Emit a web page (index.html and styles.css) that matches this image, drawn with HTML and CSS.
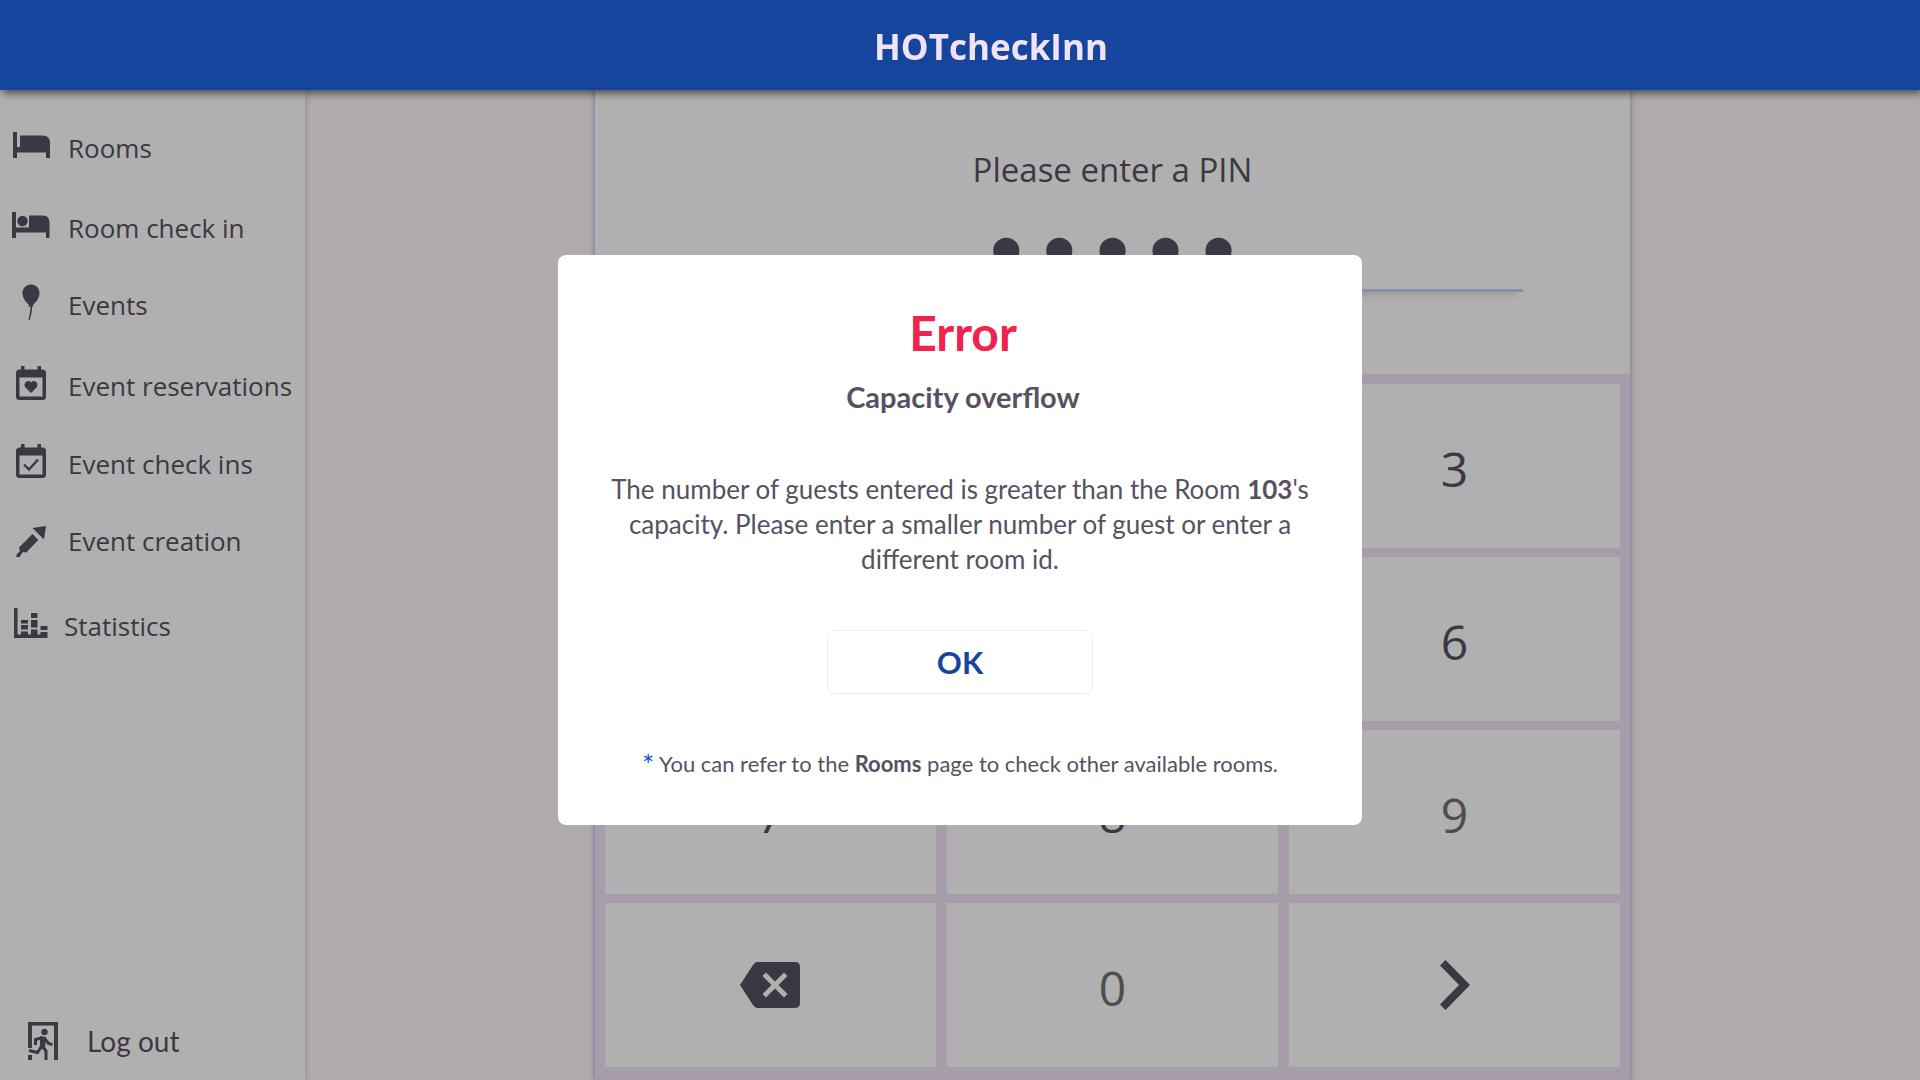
FILE: index.html
```html
<!DOCTYPE html>
<html lang="en">
<head>
<meta charset="utf-8">
<title>HOTcheckInn</title>
<link rel="stylesheet" href="styles.css">
</head>
<body>
<header class="topbar"><h1 class="brand">HOTcheckInn</h1></header>
<div class="layout">
  <aside class="sidebar">
    <nav class="menu">
      <a class="menu-item" href="#"><svg class="icon" width="38" height="38" viewBox="0 0 38 38"><path d="M1 6h4v15h3V9.500h22.500q7.500 0 7.500 7V32h-4v-5.500H5V32H1z"/></svg>Rooms</a>
      <a class="menu-item" href="#"><svg class="icon" width="38" height="38" viewBox="0 0 38 38"><path d="M0 6h4v15.500h13V9.500h14q6.500 0 6.500 7V32h-3.500v-5.500H4V32H0z"/><circle cx="10.500" cy="15" r="5.200"/></svg>Room check in</a>
      <a class="menu-item" href="#"><svg class="icon" width="38" height="38" viewBox="0 0 38 38"><path d="M19 1.500c5 0 8.500 3.800 8.500 8.500 0 5-3.500 9.500-6.800 12l1.300 1.500h-2c0 5-.8 9-2.200 13.500l-1.300-.4c1.300-4.500 1.800-8.500 1.900-13.100H16l1.300-1.500c-3.300-2.500-6.800-7-6.800-12 0-4.700 3.500-8.500 8.500-8.500z"/></svg>Events</a>
      <a class="menu-item" href="#"><svg class="icon" width="38" height="38" viewBox="0 0 38 38"><path fill-rule="evenodd" d="M9 2h3.500v3.500h13V2H29v3.500h1.500Q34 5.500 34 9v23.500q0 3.500-3.500 3.500h-23Q4 36 4 32.500V9q0-3.500 3.500-3.500H9zM7.500 13.500v19h23v-19z"/><path d="M19 29l-5.500-5.600c-3-3.300 1.800-9 5.500-5 3.700-4 8.500 1.700 5.500 5z"/></svg>Event reservations</a>
      <a class="menu-item" href="#"><svg class="icon" width="38" height="38" viewBox="0 0 38 38"><path fill-rule="evenodd" d="M9 2h3.500v3.500h13V2H29v3.500h1.500Q34 5.500 34 9v23.500q0 3.500-3.500 3.500h-23Q4 36 4 32.500V9q0-3.500 3.500-3.500H9zM7.500 13.500v19h23v-19z"/><path d="M12 22.500l5 5 9-10" fill="none" stroke="currentColor" stroke-width="2.400"/></svg>Event check ins</a>
      <a class="menu-item menu-item-low" href="#"><svg class="icon" width="38" height="38" viewBox="0 0 38 38"><path d="M34 4l-2 13.500L20.500 6zM20.500 12l5.800 6L14 30.800l-2.500-1-2.700 2.700-.8 2.500H4l1-3 3-3-1-3.500z"/></svg>Event creation</a>
      <a class="menu-item menu-item-stats" href="#"><svg class="icon" width="38" height="38" viewBox="0 0 38 38"><path d="M2 4h3.500v26.500H9v-3h7v3h3v-5h6.500v5h3V28h7v6H2zM9 16h7v3.500H9zm0 5h7v4.500H9zm10-12h6.500v5H19zm0 7h6.500v7.500H19zm9.500 6h7v4h-7z"/></svg>Statistics</a>
    </nav>
    <a class="logout" href="#"><svg class="icon" width="30" height="38" viewBox="0 0 30 38"><path d="M0 0h30v38h-4V3.500H4V26H0zM0 33h4v5H0z"/><circle cx="16.500" cy="10" r="3.200"/><path d="M16 17l-3.500 9-3 4.500-8.500-2M15 25l3 4v9M7.500 23v-5.500l6-1.500 4 1.500 3 4 4 1" fill="none" stroke="currentColor" stroke-width="3"/><path d="M12 14l6 1-1 12-5-1z"/></svg>Log out</a>
  </aside>
  <main class="content">
    <section class="panel">
      <form class="pin">
        <label class="pin-label" for="pin">Please enter a PIN</label>
        <input class="pin-input" id="pin" type="password" value="12345">
      </form>
      <div class="keypad">
        <button class="key" type="button">1</button>
        <button class="key" type="button">2</button>
        <button class="key" type="button">3</button>
        <button class="key" type="button">4</button>
        <button class="key" type="button">5</button>
        <button class="key" type="button">6</button>
        <button class="key" type="button">7</button>
        <button class="key" type="button">8</button>
        <button class="key key-muted" type="button">9</button>
        <button class="key key-icon" type="button" aria-label="Delete"><svg class="icon" width="60" height="46" viewBox="0 0 60 46"><path fill-rule="evenodd" d="M17 0h38q5 0 5 5v36q0 5-5 5H17q-2 0-4-3L0 23 13 3q2-3 4-3zM26 10.500l-3.500 3.500 9 9-9 9 3.500 3.500 9-9 9 9 3.500-3.500-9-9 9-9-3.500-3.500-9 9z"/></svg></button>
        <button class="key key-muted" type="button">0</button>
        <button class="key key-icon" type="button" aria-label="Submit"><svg class="icon" width="30" height="50" viewBox="0 0 30 50"><path d="M5.500 0L30 25 5.500 50 0 44.500 19 25 0 5.500z"/></svg></button>
      </div>
    </section>
  </main>
</div>
<div class="backdrop">
  <div class="modal" role="alertdialog" aria-labelledby="modal-title">
    <h2 class="modal-title" id="modal-title">Error</h2>
    <h3 class="modal-subtitle">Capacity overflow</h3>
    <p class="modal-text">The number of guests entered is greater than the Room <b>103</b>'s capacity. Please enter a smaller number of guest or enter a different room id.</p>
    <button class="modal-ok" type="button">OK</button>
    <p class="modal-note"><span class="star">*</span> You can refer to the <b>Rooms</b> page to check other available rooms.</p>
  </div>
</div>
</body>
</html>
```
FILE: styles.css
```css
* {
  box-sizing: border-box;
}

body {
  display: flex;
  flex-direction: column;
  min-height: 100vh;
  margin: 0;
  background: #fff8fe;
  color: #575161;
  font-family: "Open Sans", "Noto Sans", sans-serif;
}

h1, h2, h3, p {
  margin: 0;
}

a {
  color: inherit;
  text-decoration: none;
}

button {
  padding: 0;
  color: inherit;
  font-family: inherit;
}

.icon {
  flex: none;
  fill: currentColor;
}

.topbar {
  position: relative;
  z-index: 3;
  flex: none;
  height: 90px;
  padding: 22px 0 0 62px;
  background: #15459d;
  box-shadow: 2px 3px 8px rgba(0, 0, 0, 0.6);
  text-align: center;
}

.brand {
  color: #f2e2f5;
  font-size: 35px;
  line-height: 50px;
}

.layout {
  display: flex;
  flex: 1;
}

.sidebar {
  display: flex;
  flex: none;
  flex-direction: column;
  justify-content: space-between;
  width: 305px;
  padding: 35px 0 18px;
  background: #fff;
  box-shadow: 1px 0 6px rgba(87, 81, 97, 0.25);
}

.menu {
  display: grid;
  grid-template-rows: 80px 77px 81px 78px 77px 85px 46px;
  font-size: 26px;
  line-height: 46px;
  white-space: nowrap;
}

.menu-item {
  display: flex;
  align-items: center;
  align-self: start;
  gap: 18px;
  padding-left: 12px;
}

.menu-item .icon {
  margin-bottom: 6px;
}

.menu-item-low .icon {
  margin-bottom: 0;
}

.menu-item-stats {
  gap: 14px;
}

.logout {
  display: flex;
  align-items: center;
  gap: 29px;
  padding-left: 28px;
  font-family: Lato, sans-serif;
  font-size: 28px;
  line-height: 42px;
}

.content {
  display: flex;
  flex: 1;
  justify-content: center;
}

.panel {
  display: flex;
  flex-direction: column;
  width: 64.1%;
  background: #fff;
  box-shadow: 0 0 6px rgba(21, 69, 157, 0.5);
}

.pin {
  display: flex;
  flex-direction: column;
  align-items: center;
  height: 284px;
  padding-top: 56px;
}

.pin-label {
  font-size: 33px;
  line-height: 48px;
}

.pin-input {
  width: 822px;
  max-width: 80%;
  height: 98px;
  padding: 24px 0 0;
  border: 0;
  border-bottom: 3px solid #c0cffa;
  background: none;
  box-shadow: 0 10px 5px -6px rgba(0, 0, 0, 0.1);
  color: inherit;
  font-family: "DejaVu Sans", sans-serif;
  font-size: 90px;
  text-align: center;
}

.keypad {
  display: grid;
  flex: 1;
  grid-template-columns: repeat(3, 1fr);
  grid-template-rows: repeat(4, 1fr);
  gap: 9px 11px;
  padding: 10px 10px 13px;
  background: #f2e2f5;
}

.key {
  display: flex;
  align-items: center;
  justify-content: center;
  padding-top: 4px;
  border: 0;
  background: #fff;
  font-size: 48px;
}

.key-icon {
  padding-top: 0;
}

.key-muted {
  color: #717171;
}

.backdrop {
  position: fixed;
  inset: 0;
  z-index: 2;
  display: flex;
  align-items: center;
  justify-content: center;
  background: rgba(0, 0, 0, 0.31);
}

.modal {
  display: flex;
  flex-direction: column;
  align-items: center;
  width: 804px;
  max-width: 90%;
  padding: 48px 48px 44px;
  border-radius: 8px;
  background: #fff;
  font-family: Lato, sans-serif;
  text-align: center;
}

.modal-title {
  padding-left: 6px;
  color: #f0234f;
  font-size: 48px;
  line-height: 60px;
}

.modal-subtitle {
  margin-top: 16px;
  padding-left: 6px;
  font-size: 29px;
  line-height: 36px;
}

.modal-text {
  margin-top: 57px;
  font-size: 26px;
  line-height: 35px;
}

.modal-ok {
  width: 266px;
  height: 64px;
  margin-top: 53px;
  border: 1px solid #ececec;
  border-radius: 8px;
  background: #fff;
  color: #15459d;
  font-size: 31px;
  font-weight: 700;
}

.modal-note {
  margin-top: 53px;
  font-size: 22px;
  line-height: 34px;
}

.star {
  color: #1d55c4;
  font-size: 29px;
  line-height: 22px;
  vertical-align: -4px;
}
```
